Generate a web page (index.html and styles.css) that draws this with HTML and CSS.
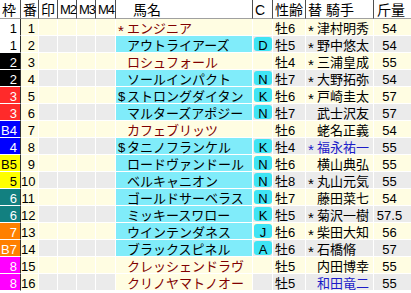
FILE: index.html
```html
<!DOCTYPE html>
<html lang="ja">
<head>
<meta charset="utf-8">
<title>出馬表</title>
<link rel="stylesheet" href="styles.css">
</head>
<body>
<table class="race">
<thead>
<tr>
<th class="c-waku">枠</th><th class="c-num">番</th><th class="c-mk">印</th><th class="c-mk m">M2</th><th class="c-mk m">M3</th><th class="c-m4 m">M4</th><th class="c-name">馬名</th><th class="c-c">C</th><th class="c-sa">性齢</th><th class="c-jk">替 騎手</th><th class="c-kin">斤量</th>
</tr>
</thead>
<tbody>
<tr class="odd"><td class="waku w1">1</td><td class="num">1</td><td class="mk"></td><td class="mk"></td><td class="mk"></td><td class="mk"></td><td class="name"><span class="pf ast">*</span>エンジニア</td><td class="cc"></td><td class="sa">牡6</td><td class="jk"><span class="pf ast">*</span>津村明秀</td><td class="kin">54</td></tr>
<tr class="even"><td class="waku w1">1</td><td class="num">2</td><td class="mk"></td><td class="mk"></td><td class="mk"></td><td class="mk"></td><td class="name cy"><span class="pf"></span>アウトライアーズ</td><td class="cc"><span class="badge">D</span></td><td class="sa">牡5</td><td class="jk"><span class="pf ast">*</span>野中悠太</td><td class="kin">54</td></tr>
<tr class="odd"><td class="waku w2">2</td><td class="num">3</td><td class="mk"></td><td class="mk"></td><td class="mk"></td><td class="mk"></td><td class="name"><span class="pf"></span>ロシュフォール</td><td class="cc"></td><td class="sa">牡4</td><td class="jk"><span class="pf ast">*</span>三浦皇成</td><td class="kin">55</td></tr>
<tr class="even"><td class="waku w2">2</td><td class="num">4</td><td class="mk"></td><td class="mk"></td><td class="mk"></td><td class="mk"></td><td class="name cy"><span class="pf"></span>ソールインパクト</td><td class="cc"><span class="badge">N</span></td><td class="sa">牡7</td><td class="jk"><span class="pf ast">*</span>大野拓弥</td><td class="kin">54</td></tr>
<tr class="odd"><td class="waku w3">3</td><td class="num">5</td><td class="mk"></td><td class="mk"></td><td class="mk"></td><td class="mk"></td><td class="name cy"><span class="pf">$</span>ストロングダイタン</td><td class="cc"><span class="badge">K</span></td><td class="sa">牡6</td><td class="jk"><span class="pf ast">*</span>戸崎圭太</td><td class="kin">57</td></tr>
<tr class="even"><td class="waku w3">3</td><td class="num">6</td><td class="mk"></td><td class="mk"></td><td class="mk"></td><td class="mk"></td><td class="name cy"><span class="pf"></span>マルターズアポジー</td><td class="cc"><span class="badge">N</span></td><td class="sa">牡7</td><td class="jk"><span class="pf"></span>武士沢友</td><td class="kin">57</td></tr>
<tr class="odd"><td class="waku w4">B4</td><td class="num">7</td><td class="mk"></td><td class="mk"></td><td class="mk"></td><td class="mk"></td><td class="name"><span class="pf"></span>カフェブリッツ</td><td class="cc"></td><td class="sa">牡6</td><td class="jk"><span class="pf"></span>蛯名正義</td><td class="kin">54</td></tr>
<tr class="even"><td class="waku w4">4</td><td class="num">8</td><td class="mk"></td><td class="mk"></td><td class="mk"></td><td class="mk"></td><td class="name cy"><span class="pf">$</span>タニノフランケル</td><td class="cc"><span class="badge">K</span></td><td class="sa">牡4</td><td class="jk blue"><span class="pf ast">*</span>福永祐一</td><td class="kin">55</td></tr>
<tr class="odd"><td class="waku w5">B5</td><td class="num">9</td><td class="mk"></td><td class="mk"></td><td class="mk"></td><td class="mk"></td><td class="name cy"><span class="pf"></span>ロードヴァンドール</td><td class="cc"><span class="badge">N</span></td><td class="sa">牡6</td><td class="jk"><span class="pf"></span>横山典弘</td><td class="kin">55</td></tr>
<tr class="even"><td class="waku w5">5</td><td class="num">10</td><td class="mk"></td><td class="mk"></td><td class="mk"></td><td class="mk"></td><td class="name cy"><span class="pf"></span>ベルキャニオン</td><td class="cc"><span class="badge">N</span></td><td class="sa">牡8</td><td class="jk"><span class="pf ast">*</span>丸山元気</td><td class="kin">55</td></tr>
<tr class="odd"><td class="waku w6">6</td><td class="num">11</td><td class="mk"></td><td class="mk"></td><td class="mk"></td><td class="mk"></td><td class="name cy"><span class="pf"></span>ゴールドサーベラス</td><td class="cc"><span class="badge">N</span></td><td class="sa">牡7</td><td class="jk"><span class="pf"></span>藤田菜七</td><td class="kin">54</td></tr>
<tr class="even"><td class="waku w6">6</td><td class="num">12</td><td class="mk"></td><td class="mk"></td><td class="mk"></td><td class="mk"></td><td class="name cy"><span class="pf"></span>ミッキースワロー</td><td class="cc"><span class="badge">K</span></td><td class="sa">牡5</td><td class="jk"><span class="pf ast">*</span>菊沢一樹</td><td class="kin">57.5</td></tr>
<tr class="odd"><td class="waku w7">7</td><td class="num">13</td><td class="mk"></td><td class="mk"></td><td class="mk"></td><td class="mk"></td><td class="name cy"><span class="pf"></span>ウインテンダネス</td><td class="cc"><span class="badge">J</span></td><td class="sa">牡6</td><td class="jk"><span class="pf ast">*</span>柴田大知</td><td class="kin">56</td></tr>
<tr class="even"><td class="waku w7">B7</td><td class="num">14</td><td class="mk"></td><td class="mk"></td><td class="mk"></td><td class="mk"></td><td class="name cy"><span class="pf"></span>ブラックスピネル</td><td class="cc"><span class="badge">A</span></td><td class="sa">牡6</td><td class="jk"><span class="pf ast">*</span>石橋脩</td><td class="kin">57</td></tr>
<tr class="odd"><td class="waku w8">8</td><td class="num">15</td><td class="mk"></td><td class="mk"></td><td class="mk"></td><td class="mk"></td><td class="name"><span class="pf"></span>クレッシェンドラヴ</td><td class="cc"></td><td class="sa">牡5</td><td class="jk"><span class="pf"></span>内田博幸</td><td class="kin">55</td></tr>
<tr class="even"><td class="waku w8">8</td><td class="num">16</td><td class="mk"></td><td class="mk"></td><td class="mk"></td><td class="mk"></td><td class="name"><span class="pf"></span>クリノヤマトノオー</td><td class="cc"></td><td class="sa">牡5</td><td class="jk blue"><span class="pf"></span>和田竜二</td><td class="kin">55</td></tr>
</tbody>
</table>
</body>
</html>
```
FILE: styles.css
```css
html, body {
  margin: 0;
  padding: 0;
  background: #ffffff;
}
body {
  font-family: "Liberation Sans", "Noto Sans CJK JP", sans-serif;
  font-size: 13px;
  color: #000000;
}
.race {
  width: 411px;
  table-layout: fixed;
  border-collapse: separate;
  border-spacing: 0;
}
.race th, .race td {
  box-sizing: border-box;
  padding: 0;
  white-space: nowrap;
  text-align: left;
  vertical-align: top;
}
.race th {
  font-size: 14px;
  font-weight: normal;
  height: 19px;
  padding-top: 2px;
  padding-left: 2px;
  line-height: 16px;
  background: #ffffff;
  border-right: 1px solid #505050;
  border-bottom: 1px solid #a0a0a0;
}
.race th.m {
  font-size: 13px;
  letter-spacing: -1px;
}
.race th.c-kin { border-right: none; padding-left: 3px; }
.c-waku { width: 21px; }
.c-num { width: 18px; }
.c-mk { width: 19px; }
.c-m4 { width: 20px; }
.race th.c-name { width: 137px; padding-left: 17px; }
.c-c { width: 20px; }
.c-sa { width: 33px; }
.c-jk { width: 68px; }
.c-kin { width: 37px; }

.race td {
  height: 17px;
  padding-top: 3px;
  line-height: 13px;
  border-right: 1px solid #ffffff;
  border-bottom: 1px solid #ffffff;
}
.odd td { background: #fffde2; }
.even td { background: #ebebeb; }
.race td.num { background: #fffde2; text-align: right; padding-right: 3px; }

.race td.waku {
  text-align: right;
  padding-right: 3px;
  border-right: 1px solid #303030;
}
.race td.w1 { background: #ffffff; color: #000000; }
.race td.w2 { background: #000000; color: #ffffff; }
.race td.w3 { background: #ff2a2a; color: #ffffff; }
.race td.w4 { background: #0000ff; color: #ffffff; }
.race td.w5 { background: #ffff00; color: #000000; }
.race td.w6 { background: #128080; color: #ffffff; }
.race td.w7 { background: #ff8000; color: #ffffff; }
.race td.w8 { background: #ff00ff; color: #ffffff; }

.race td.name {
  background: #fffde2;
  color: #800000;
  padding-left: 2px;
}
.race td.name.cy {
  background: #80ecfa;
  color: #000000;
}
.pf {
  display: inline-block;
  width: 9px;
}
.pf.ast {
  font-size: 15px;
  vertical-align: top;
  padding-top: 5px;
  line-height: 8px;
}
.race td.cc { padding: 1px 0 1px 1px; }
.badge {
  display: block;
  box-sizing: border-box;
  height: 14px;
  padding-top: 3px;
  line-height: 11px;
  background: #40e4f4;
  border-radius: 3px;
  text-align: center;
  color: #000000;
}
.race td.sa { padding-left: 2px; }
.race td.jk { padding-left: 2px; }
.race td.jk.blue { color: #1c1cc8; }
.race td.kin { text-align: center; padding-right: 6px; border-right: none; }
```
